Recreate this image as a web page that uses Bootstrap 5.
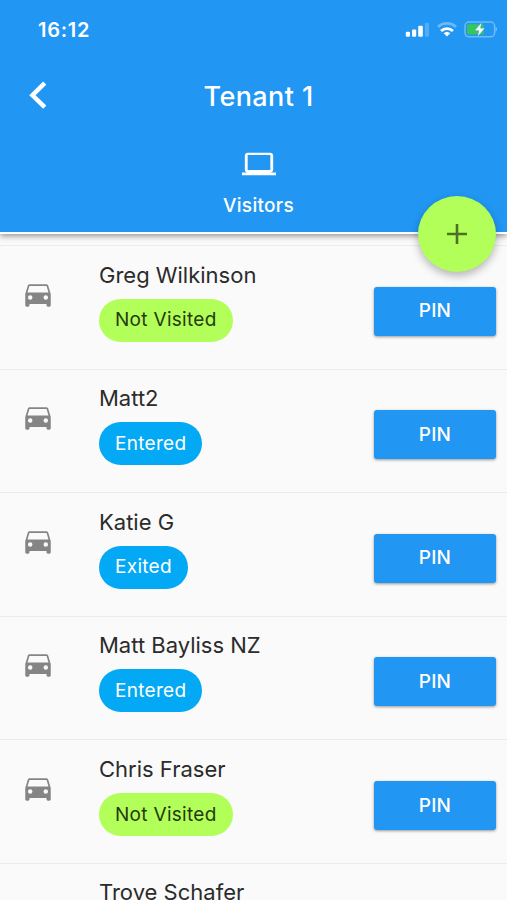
<!DOCTYPE html>
<html lang="en">
<head>
<meta charset="utf-8">
<meta name="viewport" content="width=device-width, initial-scale=1">
<title>Tenant 1 – Visitors</title>
<link rel="stylesheet" href="https://cdn.jsdelivr.net/npm/bootstrap@5.3.0/dist/css/bootstrap.min.css">
<style>
  body { font-family: Inter, "Liberation Sans", sans-serif; background: #fafafa; color: #2b2b2b; }
  .screen { height: 900px; }
  .app-header { height: 234px; background: #2196f3; color: #fff; border-bottom: 2px solid #fff; box-shadow: 0 2px 6px rgba(0,0,0,.42); z-index: 2; }
  .status-bar { height: 60px; padding: 0 10px 0 38px; }
  .clock { font-size: 20px; font-weight: 600; line-height: 24px; letter-spacing: .7px; }
  .title-bar { height: 72px; padding: 0 19px 0 29px; display: grid; grid-template-columns: 40px 1fr 40px; }
  .title { font-size: 27px; font-weight: 500; line-height: 32px; letter-spacing: .4px; padding-top: 1px; }
  .tab-item { padding: 15px 0 0 10px; }
  .tab-label { margin-top: 13px; font-size: 19px; font-weight: 500; line-height: 24px; letter-spacing: .3px; }
  .fab { right: 11px; top: 196px; width: 78px; height: 76px; background: #b2ff59; box-shadow: 0 4px 8px rgba(0,0,0,.28); z-index: 3; }
  .visitors { padding-top: 11px; }
  .visitor { height: 123.55px; border-top: 1px solid #ececec; padding: 0 11px 0 21px; }
  .car { margin-top: 30.5px; width: 78px; color: #858585; }
  .visitor-name { margin-top: 14.6px; font-size: 22px; line-height: 28px; letter-spacing: 0; }
  .pill { margin-top: 10px; height: 43px; padding: 1px 16px 0; font-size: 19px; letter-spacing: .3px; }
  .pill-new { background: #b2ff59; color: #263a10; }
  .pill-seen { background: #03a9f4; color: #fff; }
  .btn-pin { margin-top: 40.6px; width: 122px; height: 49px; padding: 7px 0 6px; background: #2196f3; color: #fff; font-size: 19px; font-weight: 500; border: 0; border-radius: 3px; box-shadow: 0 1px 3px rgba(0,0,0,.4); letter-spacing: .2px; }
</style>
</head>
<body>
<svg class="d-none" xmlns="http://www.w3.org/2000/svg">
  <symbol id="car" viewBox="0 0 24 24"><path fill="currentColor" fill-rule="evenodd" d="M19.25 6.2C19.05 5.6 18.5 5.2 17.8 5.2H6.2c-.7 0-1.25.4-1.45 1L3 12v8c0 .6.45 1 1 1h1c.55 0 1-.4 1-1v-1h12v1c0 .6.45 1 1 1h1c.55 0 1-.4 1-1v-8zM6.5 16.1a1.6 1.6 0 1 1 0-3.2 1.6 1.6 0 0 1 0 3.2zm11 0a1.6 1.6 0 1 1 0-3.2 1.6 1.6 0 0 1 0 3.2zM4.6 11l1.35-4.6h12.1L19.4 11z"/></symbol>
</svg>
<div class="screen position-relative overflow-hidden">
  <header class="app-header position-relative">
    <div class="status-bar d-flex align-items-center justify-content-between">
      <span class="clock">16:12</span>
      <svg width="92" height="20" viewBox="0 0 92 20" fill="#fff">
        <rect x=".8" y="11.7" width="4.2" height="5" rx="1"/>
        <rect x="7" y="9.4" width="4.2" height="7.3" rx="1"/>
        <rect x="13.2" y="5.8" width="4.6" height="10.9" rx="1"/>
        <rect x="19.8" y="2.8" width="4.2" height="13.9" rx="1" opacity=".22"/>
        <g fill="none" stroke="#fff" stroke-width="2.9">
          <path d="M33 6.9a13.2 13.2 0 0 1 18 0" opacity=".35"/>
          <path d="M36.1 11a8.4 8.4 0 0 1 11.8 0"/>
        </g>
        <path d="M42 16.5l-3.3-3.2a4.8 4.8 0 0 1 6.6 0z"/>
        <rect x="60" y="2" width="29.6" height="14.8" rx="4" fill="none" stroke="#fff" stroke-width="1.5" opacity=".35"/>
        <rect x="62.2" y="4.2" width="16.5" height="10.4" rx="1.6" fill="#35c759"/>
        <path d="M90.6 6.8q1.4.6 1.4 2.5t-1.4 2.5z" opacity=".42"/>
        <path d="M76.6 2.4l-6.8 8.2h4.1l-1.2 5.9 7-8.3h-4.3z" stroke="#2196f3" stroke-width=".3"/>
      </svg>
    </div>
    <div class="title-bar align-items-center">
      <svg class="mb-1" width="17" height="33" viewBox="0 0 12 24" role="img" aria-label="Back"><path fill="#fff" d="M12.4 4.8L10.1 2.5 0 12.5l10.1 9.9 2.3-2.3L4.6 12.5z"/></svg>
      <h1 class="title text-center mb-0">Tenant 1</h1>
    </div>
    <div class="tab-item d-flex flex-column align-items-center">
      <svg width="34" height="34" viewBox="0 0 24 24"><path fill="#fff" fill-rule="evenodd" d="M20 18c1.1 0 2-.9 2-2V6c0-1.1-.9-2-2-2H4c-1.1 0-2 .9-2 2v10c0 1.1.9 2 2 2H0v2h24v-2zM4 5.7h16v10.6H4z"/></svg>
      <span class="tab-label">Visitors</span>
    </div>
  </header>

  <button class="fab position-absolute border-0 rounded-circle d-flex align-items-center justify-content-center p-0" aria-label="Add visitor">
    <svg width="20" height="20" viewBox="0 0 20 20"><path d="M10 0v20M0 10h20" stroke="#4d6f27" stroke-width="2.6"/></svg>
  </button>

  <main class="visitors">
    <div class="visitor d-flex align-items-start">
      <div class="car"><svg class="d-block" width="34" height="34"><use href="#car"/></svg></div>
      <div class="flex-grow-1 d-flex flex-column align-items-start">
        <div class="visitor-name">Greg Wilkinson</div>
        <span class="pill pill-new rounded-pill d-inline-flex align-items-center">Not Visited</span>
      </div>
      <button class="btn btn-pin">PIN</button>
    </div>
    <div class="visitor d-flex align-items-start">
      <div class="car"><svg class="d-block" width="34" height="34"><use href="#car"/></svg></div>
      <div class="flex-grow-1 d-flex flex-column align-items-start">
        <div class="visitor-name">Matt2</div>
        <span class="pill pill-seen rounded-pill d-inline-flex align-items-center">Entered</span>
      </div>
      <button class="btn btn-pin">PIN</button>
    </div>
    <div class="visitor d-flex align-items-start">
      <div class="car"><svg class="d-block" width="34" height="34"><use href="#car"/></svg></div>
      <div class="flex-grow-1 d-flex flex-column align-items-start">
        <div class="visitor-name">Katie G</div>
        <span class="pill pill-seen rounded-pill d-inline-flex align-items-center">Exited</span>
      </div>
      <button class="btn btn-pin">PIN</button>
    </div>
    <div class="visitor d-flex align-items-start">
      <div class="car"><svg class="d-block" width="34" height="34"><use href="#car"/></svg></div>
      <div class="flex-grow-1 d-flex flex-column align-items-start">
        <div class="visitor-name">Matt Bayliss NZ</div>
        <span class="pill pill-seen rounded-pill d-inline-flex align-items-center">Entered</span>
      </div>
      <button class="btn btn-pin">PIN</button>
    </div>
    <div class="visitor d-flex align-items-start">
      <div class="car"><svg class="d-block" width="34" height="34"><use href="#car"/></svg></div>
      <div class="flex-grow-1 d-flex flex-column align-items-start">
        <div class="visitor-name">Chris Fraser</div>
        <span class="pill pill-new rounded-pill d-inline-flex align-items-center">Not Visited</span>
      </div>
      <button class="btn btn-pin">PIN</button>
    </div>
    <div class="visitor d-flex align-items-start">
      <div class="car"></div>
      <div class="visitor-name">Trove Schafer</div>
    </div>
  </main>
</div>
<script src="https://cdn.jsdelivr.net/npm/bootstrap@5.3.0/dist/js/bootstrap.bundle.min.js"></script>
</body>
</html>
